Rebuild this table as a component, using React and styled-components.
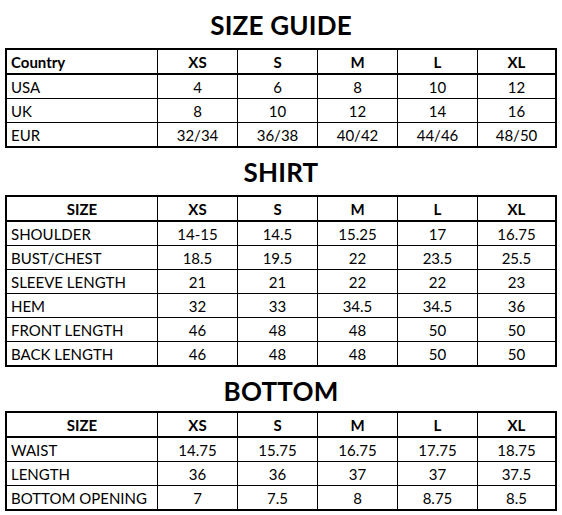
import React from "react";
import styled, { createGlobalStyle } from "styled-components";

const GlobalStyle = createGlobalStyle`
  body {
    margin: 0;
    background: #ffffff;
    font-family: Lato, "Open Sans", Arial, sans-serif;
    color: #000000;
  }
`;

const Page = styled.div`
  width: 562px;
  box-sizing: border-box;
  padding: 9px 5px 0 5px;
  display: flex;
  flex-direction: column;
`;

const Section = styled.section`
  display: flex;
  flex-direction: column;
  margin-bottom: ${(p) => p.$gap || 0}px;
`;

const Title = styled.h1`
  margin: 0 0 ${(p) => p.$space || 7}px 0;
  font-size: 26px;
  line-height: 32px;
  font-weight: 700;
  text-align: center;
  letter-spacing: 0.2px;
`;

const Grid = styled.div`
  display: grid;
  grid-template-columns: 151px repeat(4, 80px) 77px;
  width: 552px;
  box-sizing: border-box;
  border: 2px solid #000;
`;

const Cell = styled.div`
  box-sizing: border-box;
  height: ${(p) => (p.$head ? 25 : p.$lastRow ? 23 : 24)}px;
  display: flex;
  align-items: center;
  justify-content: ${(p) => (p.$left ? "flex-start" : "center")};
  padding: 1px 0 0 ${(p) => (p.$left ? 4 : 0)}px;
  border-right: ${(p) => (p.$lastCol ? "none" : "1px solid #000")};
  border-bottom: ${(p) =>
    p.$lastRow ? "none" : p.$head ? "2px solid #000" : "1px solid #000"};
  font-size: 15px;
  font-weight: ${(p) => (p.$head ? 700 : 400)};
  white-space: nowrap;
`;

const SIZES = ["XS", "S", "M", "L", "XL"];

const guide = [
  ["USA", "4", "6", "8", "10", "12"],
  ["UK", "8", "10", "12", "14", "16"],
  ["EUR", "32/34", "36/38", "40/42", "44/46", "48/50"],
];

const shirt = [
  ["SHOULDER", "14-15", "14.5", "15.25", "17", "16.75"],
  ["BUST/CHEST", "18.5", "19.5", "22", "23.5", "25.5"],
  ["SLEEVE LENGTH", "21", "21", "22", "22", "23"],
  ["HEM", "32", "33", "34.5", "34.5", "36"],
  ["FRONT LENGTH", "46", "48", "48", "50", "50"],
  ["BACK LENGTH", "46", "48", "48", "50", "50"],
];

const bottom = [
  ["WAIST", "14.75", "15.75", "16.75", "17.75", "18.75"],
  ["LENGTH", "36", "36", "37", "37", "37.5"],
  ["BOTTOM OPENING", "7", "7.5", "8", "8.75", "8.5"],
];

const SizeTable = ({ corner, cornerLeft, rows }) => (
  <Grid>
    {[corner, ...SIZES].map((h, i) => (
      <Cell key={"h" + i} $head $left={i === 0 && cornerLeft} $lastCol={i === 5}>
        {h}
      </Cell>
    ))}
    {rows.map((row, r) =>
      row.map((v, c) => (
        <Cell
          key={r + "-" + c}
          $left={c === 0}
          $lastCol={c === 5}
          $lastRow={r === rows.length - 1}
        >
          {v}
        </Cell>
      ))
    )}
  </Grid>
);

const App = () => (
  <Page>
    <GlobalStyle />
    <Section $gap={8}>
      <Title>SIZE GUIDE</Title>
      <SizeTable corner="Country" cornerLeft rows={guide} />
    </Section>
    <Section $gap={8}>
      <Title>SHIRT</Title>
      <SizeTable corner="SIZE" rows={shirt} />
    </Section>
    <Section>
      <Title $space={4}>BOTTOM</Title>
      <SizeTable corner="SIZE" rows={bottom} />
    </Section>
  </Page>
);

export default App;
